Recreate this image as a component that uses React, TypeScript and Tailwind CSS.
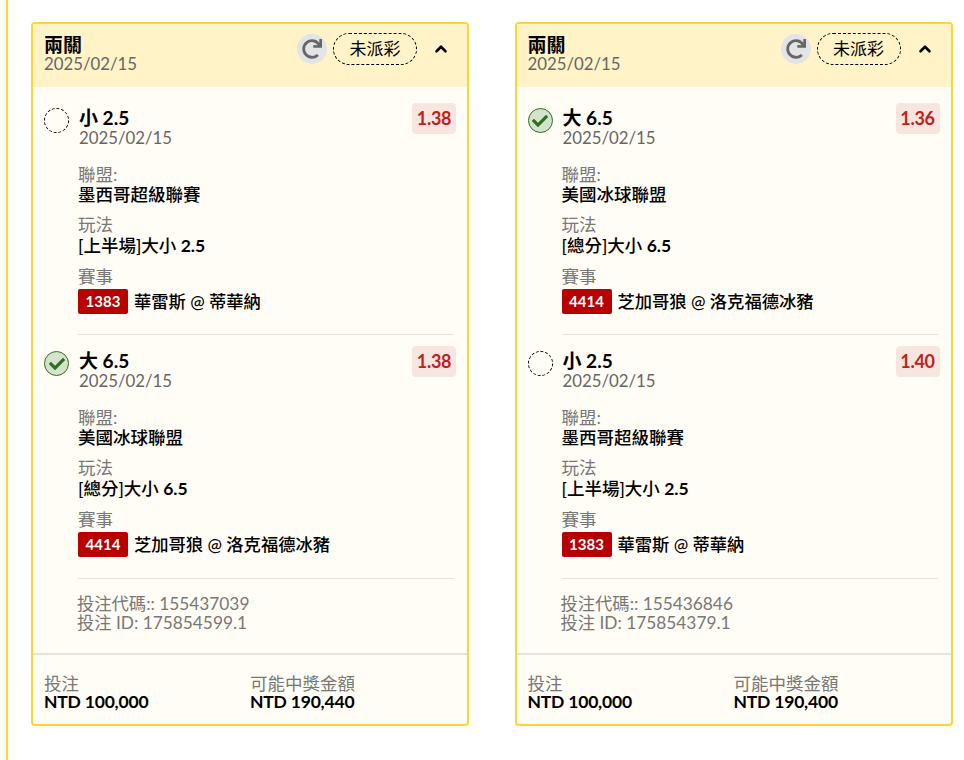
import React from "react";
import { ChevronUp } from "lucide-react";
import { FaCheck, FaRedo } from "react-icons/fa";

const font = "font-['Lato','Noto_Sans_CJK_TC',sans-serif]";

type Leg = { pick: string; won: boolean; odds: string; league: string; play: string; line: string; code: string; match: string };

const cards: { legs: Leg[]; code: string; id: string; win: string }[] = [
  {
    code: "155437039",
    id: "175854599.1",
    win: "NTD 190,440",
    legs: [
      { pick: "小 2.5", won: false, odds: "1.38", league: "墨西哥超級聯賽", play: "[上半場]大小", line: "2.5", code: "1383", match: "華雷斯 @ 蒂華納" },
      { pick: "大 6.5", won: true, odds: "1.38", league: "美國冰球聯盟", play: "[總分]大小", line: "6.5", code: "4414", match: "芝加哥狼 @ 洛克福德冰豬" },
    ],
  },
  {
    code: "155436846",
    id: "175854379.1",
    win: "NTD 190,400",
    legs: [
      { pick: "大 6.5", won: true, odds: "1.36", league: "美國冰球聯盟", play: "[總分]大小", line: "6.5", code: "4414", match: "芝加哥狼 @ 洛克福德冰豬" },
      { pick: "小 2.5", won: false, odds: "1.40", league: "墨西哥超級聯賽", play: "[上半場]大小", line: "2.5", code: "1383", match: "華雷斯 @ 蒂華納" },
    ],
  },
];

function LegRow({ leg }: { leg: Leg }) {
  return (
    <div className="flex">
      <div className="w-[34px] shrink-0 pt-[5px]">
        {leg.won ? (
          <div className="w-[25px] h-[25px] rounded-full border border-[#2e7020] bg-[#d5e3cc] flex items-center justify-center">
            <FaCheck size={16} className="text-[#2e7020]" />
          </div>
        ) : (
          <div className="w-[25px] h-[25px] rounded-full border border-dashed border-black" />
        )}
      </div>
      <div className="flex-1">
        <div className="flex justify-between">
          <div className="pt-[5px] pl-[1px]">
            <div className="text-[19px] leading-[20px] font-bold text-black">{leg.pick}</div>
            <div className="text-[16.8px] leading-[20px] text-[#666]">2025/02/15</div>
          </div>
          <div className="h-[31px] w-[44px] text-center rounded-[4px] bg-[#f7e6e0] text-[#c02020] text-[18px] leading-[31px] font-bold tracking-[-0.3px]">{leg.odds}</div>
        </div>
        <div className="mt-[17px] text-[17.5px] leading-[20px] text-[#777]">聯盟:</div>
        <div className="text-[17.5px] leading-[20px] font-medium text-black">{leg.league}</div>
        <div className="mt-[10px] text-[17.5px] leading-[20px] text-[#777]">玩法</div>
        <div className="text-[17.5px] leading-[21px] font-medium text-black">
          {leg.play} <span className="font-bold">{leg.line}</span>
        </div>
        <div className="mt-[11px] text-[17.5px] leading-[20px] text-[#777]">賽事</div>
        <div className="mt-[2px] flex items-center gap-[6px]">
          <span className="w-[50px] h-[25px] rounded-[2px] bg-[#b80000] text-white text-[15px] leading-[25px] font-bold text-center">{leg.code}</span>
          <span className="text-[17.3px] leading-[22px] font-medium text-black">{leg.match}</span>
        </div>
      </div>
    </div>
  );
}

export default function App() {
  return (
    <div className={`${font} w-[964px] h-[760px] overflow-hidden bg-white flex`}>
      <div className="w-[8px] h-full shrink-0 bg-[#fffdf5] border-r-2 border-[#ffd52e]" />
      <div className="flex gap-[45.5px] pl-[23px] pt-[22px] items-start">
        {cards.map((card) => (
          <div key={card.code} className="w-[438px] h-[704px] rounded-[4px] border-2 border-[#ffd52e] bg-[#fffdf5] flex flex-col overflow-hidden">
            <div className="h-[63px] bg-[#fff3c7] pl-[11px] pr-[17px] flex justify-between items-start">
              <div className="pt-[11px]">
                <div className="text-[19px] leading-[20px] font-bold text-black">兩關</div>
                <div className="text-[16.8px] leading-[17px] text-[#666]">2025/02/15</div>
              </div>
              <div className="pt-[9px] flex items-center">
                <div className="w-[30px] h-[30px] rounded-full bg-[#e3e4e6] flex items-center justify-center">
                  <FaRedo size={20} className="text-[#666]" />
                </div>
                <div className="ml-[6px] w-[84px] h-[32px] rounded-full border border-dashed border-black text-center text-[17px] leading-[30px] text-black">未派彩</div>
                <ChevronUp size={18} strokeWidth={3.5} className="ml-[15px] text-black" />
              </div>
            </div>
            <div className="flex-1 pl-[11px] pr-[11px] pt-[16px]">
              <LegRow leg={card.legs[0]} />
              <div className="ml-[34px] mr-[2px] mt-[20px] mb-[11px] border-t border-[#e5e3dc]" />
              <LegRow leg={card.legs[1]} />
              <div className="ml-[34px] mr-[2px] mt-[21px] border-t border-[#e5e3dc]" />
              <div className="ml-[33px] mt-[15px] text-[17.3px] leading-[19px] text-[#777]">
                <div>投注代碼:: {card.code}</div>
                <div>投注 ID: {card.id}</div>
              </div>
            </div>
            <div className="h-[71px] border-t-2 border-[#e5e3dc] pl-[11px] pt-[20px] flex">
              <div className="w-[206px]">
                <div className="text-[17.5px] leading-[18px] text-[#777]">投注</div>
                <div className="text-[17.5px] leading-[18px] font-bold tracking-[-0.2px] text-black">NTD 100,000</div>
              </div>
              <div>
                <div className="text-[17.5px] leading-[18px] text-[#777]">可能中獎金額</div>
                <div className="text-[17.5px] leading-[18px] font-bold tracking-[-0.2px] text-black">{card.win}</div>
              </div>
            </div>
          </div>
        ))}
      </div>
    </div>
  );
}
